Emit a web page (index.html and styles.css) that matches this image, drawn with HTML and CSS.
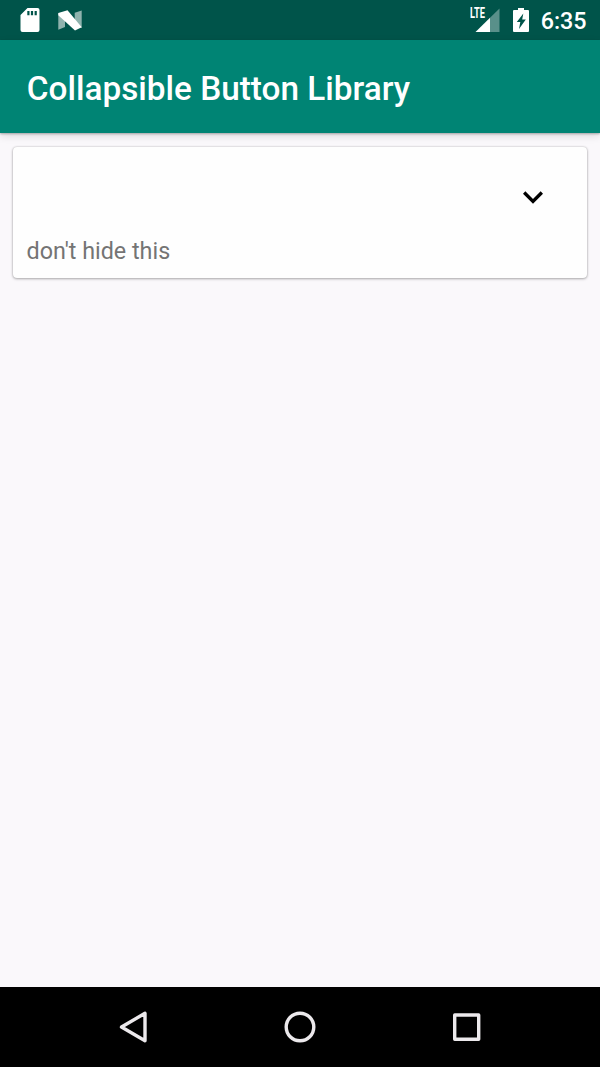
FILE: index.html
```html
<!DOCTYPE html>
<html lang="en">
<head>
<meta charset="utf-8">
<title>Collapsible Button Library</title>
<link rel="stylesheet" href="styles.css">
</head>
<body>
<div class="screen">
  <div class="status-bar">
    <svg class="icon-sd" width="20" height="24" viewBox="0 0 20 24"><path fill="#fff" fill-rule="evenodd" d="M7.5 0H17.5Q19.5 0 19.5 2V22Q19.5 24 17.5 24H2.5Q.5 24 .5 22V7ZM7.3 3V7.3H9.5V3ZM10.9 3V7.3H13.1V3ZM14.6 3V7.3H16.8V3Z"/></svg>
    <svg class="icon-n" width="24" height="22" viewBox="0 0 24 22"><path fill="#8fb3ae" d="M.3 3L7 6V17L.3 19.7ZM16.7 2.8L23.7 .5V18L16.7 15Z"/><path fill="#fff" d="M.3 3L9.5 .2L23.7 17.2L17 20.5L.3 5.2Z"/></svg>
    <div class="status-right">
      <svg class="icon-signal" width="30" height="32" viewBox="0 -8 30 32"><path fill="#59908a" d="M20 9.7L29.5 .5V24H20Z"/><path fill="#fff" d="M5.5 24L20 9.7V24Z"/><text class="signal-label" x="0" y="10.2" textLength="15" lengthAdjust="spacingAndGlyphs">LTE</text></svg>
      <svg class="icon-battery" width="16" height="25" viewBox="0 0 16 25"><path fill="#fff" fill-rule="evenodd" d="M5 0H11V2H15Q16 2 16 3V23Q16 24 15 24H1Q0 24 0 23V3Q0 2 1 2H5ZM10.3 5.5L3.8 14H7.3L6 21L12.8 11.5H9.2Z"/></svg>
      <span class="clock">6:35</span>
    </div>
  </div>
  <header class="app-bar"><h1 class="title">Collapsible Button Library</h1></header>
  <main class="content">
    <section class="card">
      <div class="card-header">
        <svg width="40" height="40" viewBox="0 0 24 24"><path d="M16.59 8.59L12 13.17 7.41 8.59 6 10l6 6 6-6z"/></svg>
      </div>
      <p class="card-text">don't hide this</p>
    </section>
  </main>
  <nav class="nav-bar">
    <div class="nav-item"><svg width="40" height="40" viewBox="0 0 40 40"><path d="M8.5 20L32 6.3V33.7Z"/></svg></div>
    <div class="nav-item"><svg width="40" height="40" viewBox="0 0 40 40"><circle cx="20" cy="20" r="13.8"/></svg></div>
    <div class="nav-item"><svg width="40" height="40" viewBox="0 0 40 40"><rect x="7.7" y="8" width="24" height="24.3"/></svg></div>
  </nav>
</div>
</body>
</html>
```
FILE: styles.css
```css
body {
  margin: 0;
  font-family: Roboto, sans-serif;
}

.screen {
  display: flex;
  flex-direction: column;
  width: 600px;
  height: 1067px;
  overflow: hidden;
  background: #faf8fb;
}

.status-bar {
  display: flex;
  box-sizing: border-box;
  height: 40px;
  padding: 8px 13.4px 0 20px;
  background: #00544a;
}

.icon-n {
  margin: 2px 0 0 18px;
}

.status-right {
  display: flex;
  margin-left: auto;
}

.icon-signal {
  margin-top: -8px;
}

.signal-label {
  fill: #fff;
  font-size: 14px;
  font-weight: 700;
}

.icon-battery {
  margin: 0 12px 0 13px;
}

.clock {
  color: #fff;
  font-size: 23.33px;
  font-weight: 500;
  line-height: 27px;
}

.app-bar {
  display: flex;
  align-items: center;
  box-sizing: border-box;
  height: 93px;
  padding: 4px 26.8px 0;
  background: #008474;
  box-shadow: 0 1px 2px rgba(0, 0, 0, .28), 0 3px 8px rgba(0, 0, 0, .12);
}

.title {
  margin: 0;
  color: #fff;
  font-size: 33.33px;
  font-weight: 500;
  line-height: 40px;
}

.content {
  flex: 1;
  padding: 14px 13px;
}

.card {
  box-sizing: border-box;
  height: 131px;
  padding: 13px 13.5px;
  border-radius: 4px;
  background: #fefefe;
  box-shadow: 0 0 2px rgba(0, 0, 0, .22), 0 1px 3px rgba(0, 0, 0, .28);
}

.card-header {
  display: flex;
  align-items: center;
  justify-content: flex-end;
  height: 73px;
  padding-right: 20.4px;
}

.card-text {
  margin: 5px 0 0;
  color: #747474;
  font-size: 23.33px;
  line-height: 27px;
}

.nav-bar {
  display: flex;
  height: 80px;
  padding: 0 50px;
  background: #000;
}

.nav-item {
  display: flex;
  flex: 1;
  align-items: center;
  justify-content: center;
}

.nav-item svg {
  fill: none;
  stroke: #ece9ec;
  stroke-width: 3.4;
  stroke-linejoin: round;
}
```
